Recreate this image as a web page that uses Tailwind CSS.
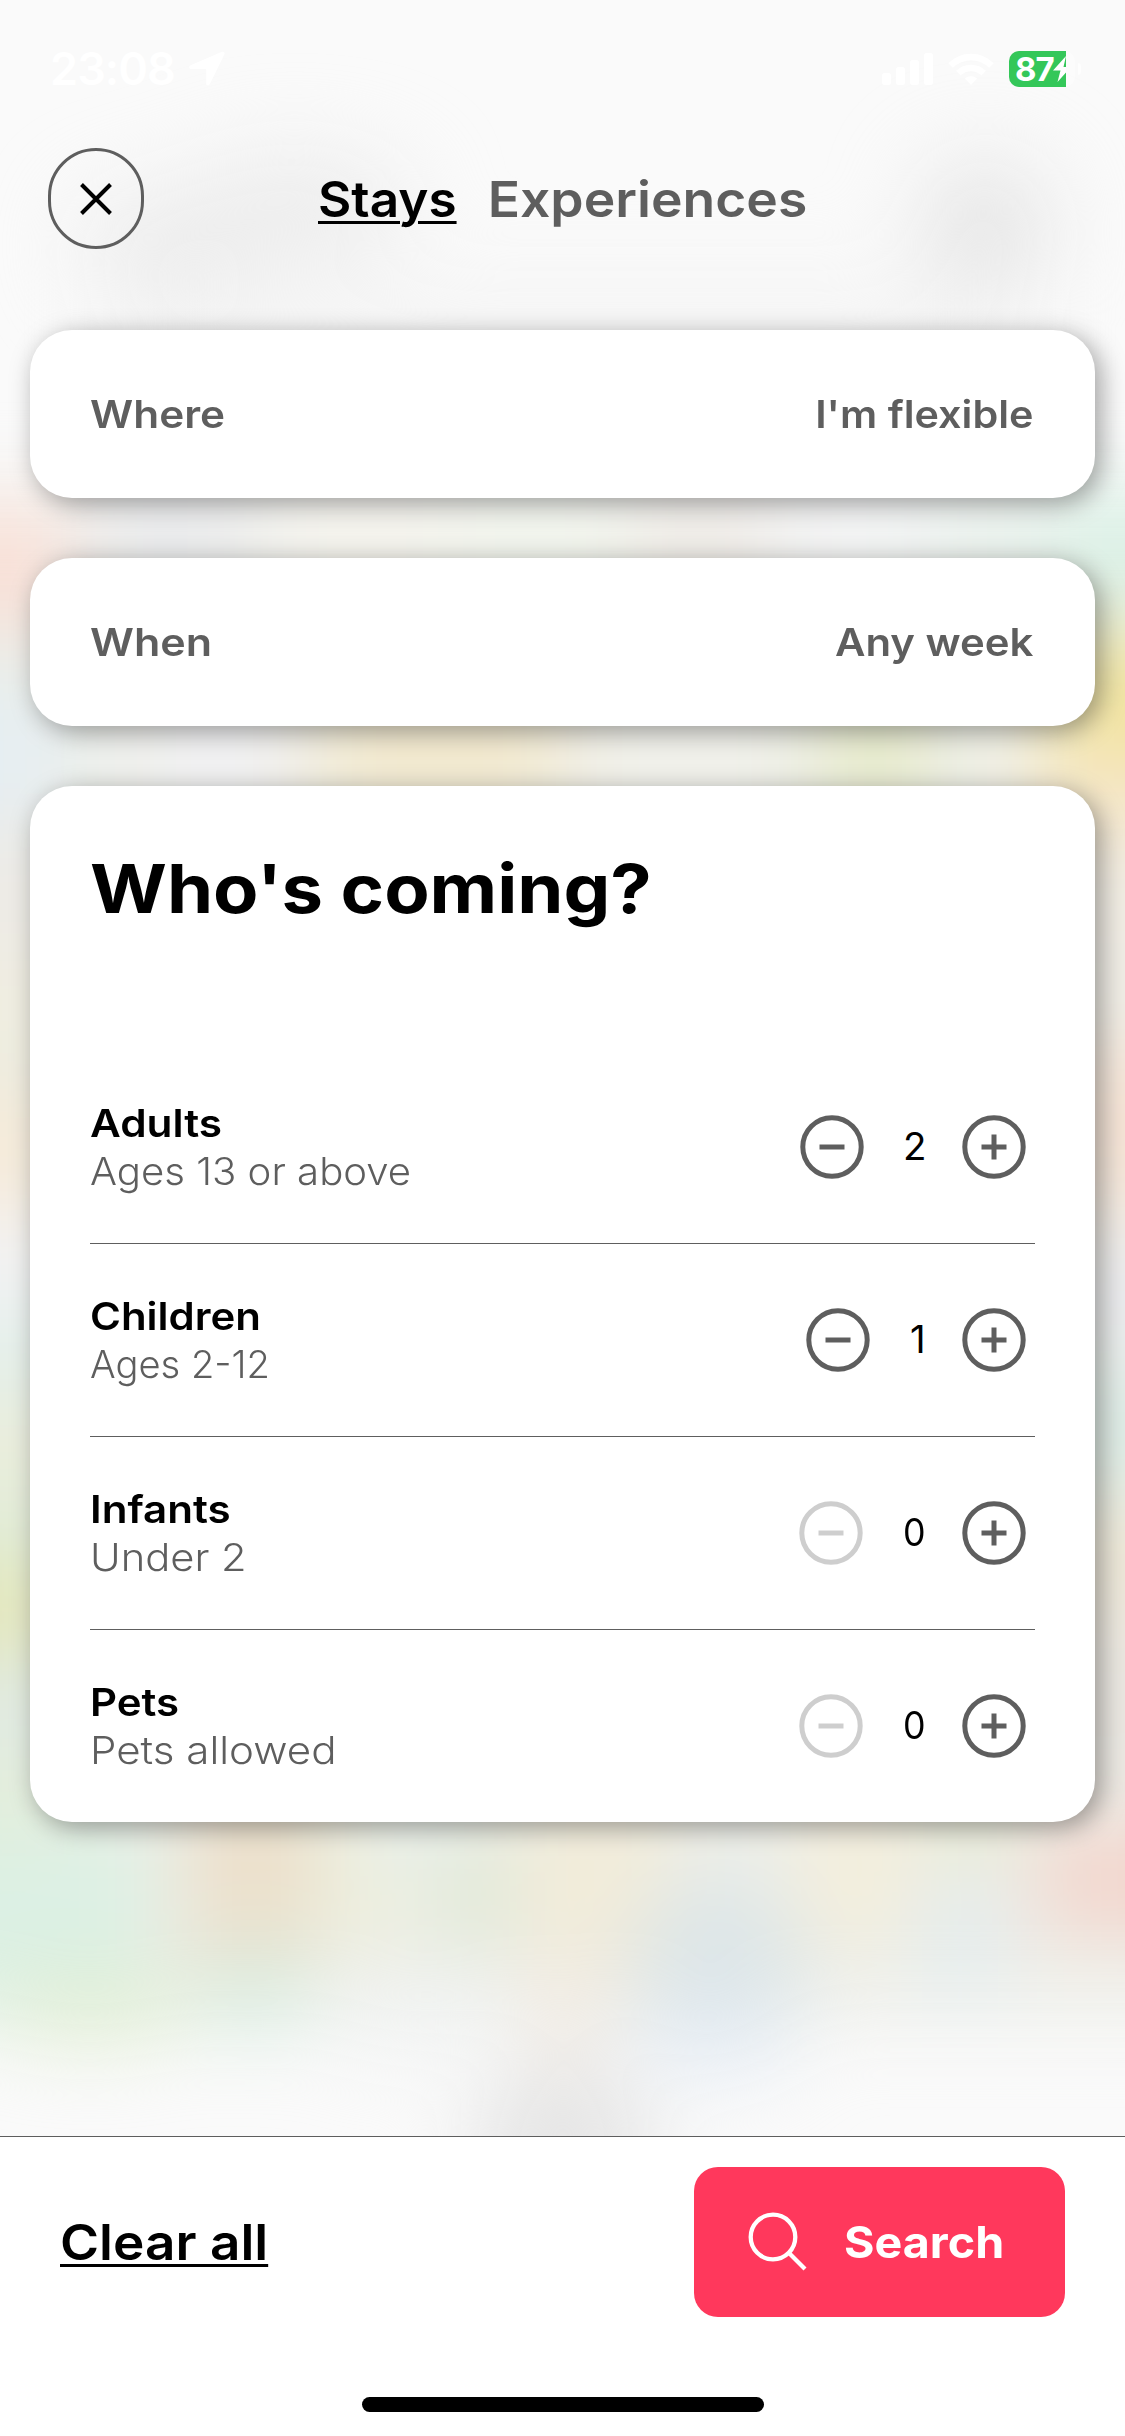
<!DOCTYPE html>
<html lang="en">
<head>
<meta charset="utf-8">
<meta name="viewport" content="width=device-width, initial-scale=1">
<title>Search stays</title>
<script src="https://cdn.jsdelivr.net/npm/@tailwindcss/browser@4"></script>
</head>
<body class="bg-[#fafafa] font-['Inter',sans-serif] text-black">
<div class="relative isolate flex h-[2436px] w-[1125px] flex-col overflow-hidden">

  <!-- Frosted map backdrop -->
  <svg class="absolute inset-0 -z-10" width="1125" height="2436" viewBox="0 0 1125 2436" color-interpolation-filters="sRGB">
    <defs>
      <filter id="soft" filterUnits="userSpaceOnUse" x="-200" y="-200" width="1525" height="2836"><feGaussianBlur stdDeviation="40"/></filter>
      <filter id="haze" filterUnits="userSpaceOnUse" x="-200" y="-200" width="1525" height="2836"><feGaussianBlur stdDeviation="46"/></filter>
    </defs>
    <rect width="1125" height="2436" fill="#fafafa"/>
    <g filter="url(#haze)">
      <ellipse cx="165" cy="245" rx="85" ry="50" fill="#ebebeb"/>
      <ellipse cx="295" cy="210" rx="115" ry="50" fill="#ebebeb"/>
      <ellipse cx="985" cy="226" rx="62" ry="62" fill="#e3e3e3"/>
      <rect x="120" y="290" width="900" height="90" fill="#f4f4f4"/>
    </g>
    <g filter="url(#soft)">
      <rect x="-150" y="490" width="1425" height="1530" fill="#eeefe9"/>
      <rect x="-150" y="510" width="215" height="120" fill="#fadfd6"/>
      <rect x="-150" y="630" width="215" height="70" fill="#e9efea"/>
      <rect x="-150" y="700" width="215" height="120" fill="#e5eef3"/>
      <rect x="-150" y="820" width="215" height="140" fill="#edebe6"/>
      <rect x="-150" y="960" width="215" height="90" fill="#f0eddf"/>
      <rect x="-150" y="1050" width="215" height="40" fill="#e9ede2"/>
      <rect x="-150" y="1090" width="215" height="120" fill="#f6ead8"/>
      <rect x="-150" y="1210" width="215" height="100" fill="#f2f2f4"/>
      <rect x="-150" y="1310" width="215" height="90" fill="#e2efea"/>
      <rect x="-150" y="1400" width="215" height="90" fill="#ebedda"/>
      <rect x="-150" y="1490" width="215" height="80" fill="#dfecd8"/>
      <rect x="-150" y="1570" width="215" height="80" fill="#e4e6b4"/>
      <rect x="-150" y="1650" width="215" height="110" fill="#dfeae2"/>
      <rect x="-150" y="1760" width="215" height="70" fill="#e4eed9"/>

      <rect x="1060" y="490" width="215" height="120" fill="#daf0e5"/>
      <rect x="1050" y="640" width="225" height="110" fill="#f1e49c"/>
      <rect x="1030" y="750" width="245" height="80" fill="#f6e5c4"/>
      <rect x="1060" y="830" width="215" height="150" fill="#f1ede4"/>
      <rect x="1060" y="1040" width="215" height="170" fill="#f5e3d5"/>
      <rect x="1060" y="1250" width="215" height="90" fill="#eaeaee"/>
      <rect x="1060" y="1370" width="215" height="120" fill="#dcece6"/>
      <rect x="1060" y="1500" width="215" height="110" fill="#eee7d6"/>
      <rect x="1060" y="1610" width="215" height="180" fill="#ebe7e1"/>

      <rect x="90" y="500" width="160" height="80" fill="#e5e6e9"/>
      <rect x="270" y="500" width="180" height="80" fill="#f3f1ea"/>
      <rect x="450" y="500" width="180" height="80" fill="#eff3ea"/>
      <rect x="630" y="500" width="140" height="80" fill="#ece7e2"/>
      <rect x="770" y="500" width="160" height="80" fill="#f0f1f3"/>
      <rect x="930" y="500" width="130" height="80" fill="#e5efea"/>
      <rect x="150" y="690" width="130" height="120" fill="#f0f0f3"/>
      <rect x="320" y="690" width="240" height="120" fill="#f2e8cc"/>
      <rect x="580" y="690" width="190" height="120" fill="#f0f0ea"/>
      <rect x="820" y="690" width="110" height="120" fill="#e5e9c7"/>

      <rect x="-150" y="1830" width="300" height="190" fill="#dcf0e4"/>
      <rect x="190" y="1780" width="120" height="180" fill="#ecdfca"/>
      <rect x="310" y="1800" width="110" height="150" fill="#edeedd"/>
      <rect x="370" y="1800" width="80" height="70" fill="#e8f1ee"/>
      <rect x="440" y="1840" width="70" height="110" fill="#dfe8d6"/>
      <rect x="520" y="1800" width="150" height="200" fill="#f2ecd9"/>
      <rect x="800" y="1800" width="110" height="140" fill="#f4eedb"/>
      <rect x="930" y="1790" width="80" height="70" fill="#e8ead0"/>
      <rect x="920" y="1880" width="80" height="120" fill="#e3ecee"/>
      <rect x="1040" y="1830" width="220" height="100" fill="#f3d4cb"/>
      <ellipse cx="255" cy="1990" rx="60" ry="46" fill="#d9ece0"/>
      <ellipse cx="90" cy="2010" rx="110" ry="34" fill="#e1eed4"/>
      <rect x="340" y="1960" width="170" height="90" fill="#f0f2f1"/>
      <ellipse cx="718" cy="1965" rx="90" ry="90" fill="#dde6e8"/>
      <ellipse cx="710" cy="2040" rx="85" ry="36" fill="#e5ecf4"/>
      <rect x="530" y="1950" width="70" height="160" fill="#f1ebe4"/>
      <ellipse cx="562" cy="2145" rx="95" ry="80" fill="#e6e6e6"/>
    </g>
  </svg>

  <!-- Status bar -->
  <div class="flex h-[137px] items-center justify-between pl-[50px] pr-[44px] text-white">
    <div class="flex items-center gap-[14px]">
      <span class="text-[45px] leading-[54px] font-semibold tracking-[-0.900px]">23:08</span>
      <svg width="36" height="35" viewBox="0 0 36 35" fill="currentColor"><path d="M33 .8 1.6 14.2C-.6 15.200-.2 18 2.200 18H16.400c.5 0 .8.300.8.800v13.400c0 2.500 2.700 3 3.700.8L35.300 3.600C36.200 1.600 34.800.1 33 .8Z"/></svg>
    </div>
    <div class="flex items-center">
      <svg width="52" height="34" viewBox="0 0 52 34" fill="currentColor"><rect y="21" width="9" height="12" rx="2.500"/><rect x="14" y="15" width="9" height="18" rx="2.500"/><rect x="28" y="8" width="9" height="25" rx="2.500"/><rect x="42" y="1" width="9" height="32" rx="2.500"/></svg>
      <svg class="ml-[14px]" width="46" height="34" viewBox="0 0 46 34" fill="none" stroke="currentColor" stroke-width="6.500"><path d="M2.600 13.500C14 2 32 2 43.400 13.500M10.300 21.200c7.200-7 18.200-7 25.400 0"/><path d="m23 33-6-6.500c3.500-3 8.500-3 12 0Z" fill="currentColor" stroke="none"/></svg>
      <div class="ml-[15px] flex h-9 w-[66px] rounded-[10px] bg-white/40">
        <div class="flex h-9 w-[57px] items-center rounded-l-[10px] bg-[#34c759] pl-[6px]">
          <span class="w-[38px] text-[33px] leading-9 font-bold tracking-[-1px]">87</span>
          <svg class="shrink-0" width="13" height="26" viewBox="0 0 13 26" fill="currentColor"><path d="M13 0 0 14.500h7.500L4.500 26 18 11h-7.500Z"/></svg>
        </div>
      </div>
      <div class="ml-[3px] h-3 w-[3px] rounded-r-full bg-white/70"></div>
    </div>
  </div>

  <!-- Tabs -->
  <header class="relative mt-[11px] flex h-[101px] items-center justify-center">
    <button class="absolute left-12 top-0 flex h-[101px] w-24 items-center justify-center rounded-[48px] border-[3px] border-[#5e5e5e]" aria-label="Close">
      <svg width="32" height="32" viewBox="0 0 32 32" fill="none" stroke="#000" stroke-width="4"><path d="m1.500 1.500 29 29m0-29-29 29"/></svg>
    </button>
    <nav class="flex w-[489px] justify-between text-[50px] leading-[60px] font-[560]">
      <a class="origin-left scale-x-[1.025] underline decoration-[3px] underline-offset-[4px]">Stays</a>
      <a class="origin-right scale-x-[1.068] text-[#5e5e5e]">Experiences</a>
    </nav>
  </header>

  <!-- Search criteria -->
  <main class="mt-[81px] flex flex-col gap-[60px] px-[30px]">
    <section class="flex h-[168px] items-center justify-between rounded-[42px] bg-white pl-[60px] pr-[62px] text-[38.5px] leading-[60px] font-[560] text-[#5e5e5e] shadow-[6px_6px_26px_rgba(0,0,0,0.360)]">
      <span class="origin-left scale-x-[1.100]">Where</span><span class="origin-right scale-x-[1.073]">I'm flexible</span>
    </section>
    <section class="flex h-[168px] items-center justify-between rounded-[42px] bg-white pl-[60px] pr-[62px] text-[38.5px] leading-[60px] font-[560] text-[#5e5e5e] shadow-[6px_6px_26px_rgba(0,0,0,0.360)]">
      <span class="origin-left scale-x-[1.118]">When</span><span class="origin-right scale-x-[1.088]">Any week</span>
    </section>
    <section class="h-[1036px] rounded-[42px] bg-white px-[60px] pt-[63px] shadow-[6px_6px_26px_rgba(0,0,0,0.360)]">
      <h1 class="mb-[122px] w-max origin-left scale-x-[1.106] text-[67px] leading-[80px] font-bold">Who's coming?</h1>

      <div class="flex items-center justify-between py-12 pr-[9px]">
        <div class="text-[38.5px] leading-[48px]"><h2 class="w-max origin-left scale-x-[1.100] font-semibold">Adults</h2><p class="w-max origin-left scale-x-[1.042] font-[350] text-[#5e5e5e]">Ages 13 or above</p></div>
        <div class="flex items-center">
          <svg width="64" height="64" viewBox="0 0 64 64" fill="none" stroke="#5e5e5e" stroke-width="5"><circle cx="32" cy="32" r="29.200"/><path d="M19.500 32h25"/></svg>
          <span class="w-[98px] pl-[39px] text-[38.5px]">2</span>
          <svg width="64" height="64" viewBox="0 0 64 64" fill="none" stroke="#5e5e5e" stroke-width="5"><circle cx="32" cy="32" r="29.200"/><path d="M19.500 32h25M32 19.500v25"/></svg>
        </div>
      </div>

      <div class="flex items-center justify-between border-t border-[#5e5e5e] py-12 pr-[9px]">
        <div class="text-[38.5px] leading-[48px]"><h2 class="w-max origin-left scale-x-[1.090] font-semibold">Children</h2><p class="w-max origin-left scale-x-[0.990] font-[350] text-[#5e5e5e]">Ages 2-12</p></div>
        <div class="flex items-center">
          <svg width="64" height="64" viewBox="0 0 64 64" fill="none" stroke="#5e5e5e" stroke-width="5"><circle cx="32" cy="32" r="29.200"/><path d="M19.500 32h25"/></svg>
          <span class="w-[92px] pl-[40px] text-[38.5px]">1</span>
          <svg width="64" height="64" viewBox="0 0 64 64" fill="none" stroke="#5e5e5e" stroke-width="5"><circle cx="32" cy="32" r="29.200"/><path d="M19.500 32h25M32 19.500v25"/></svg>
        </div>
      </div>

      <div class="flex items-center justify-between border-t border-[#5e5e5e] py-12 pr-[9px]">
        <div class="text-[38.5px] leading-[48px]"><h2 class="w-max origin-left scale-x-[1.095] font-semibold">Infants</h2><p class="w-max origin-left scale-x-[1.082] font-[350] text-[#5e5e5e]">Under 2</p></div>
        <div class="flex items-center">
          <svg width="64" height="64" viewBox="0 0 64 64" fill="none" stroke="#cecece" stroke-width="5"><circle cx="32" cy="32" r="29.200"/><path d="M19.500 32h25"/></svg>
          <span class="w-[99px] pl-[40px]"><span class="inline-block origin-left scale-x-[0.930] text-[38.5px]">0</span></span>
          <svg width="64" height="64" viewBox="0 0 64 64" fill="none" stroke="#5e5e5e" stroke-width="5"><circle cx="32" cy="32" r="29.200"/><path d="M19.500 32h25M32 19.500v25"/></svg>
        </div>
      </div>

      <div class="flex items-center justify-between border-t border-[#5e5e5e] py-12 pr-[9px]">
        <div class="text-[38.5px] leading-[48px]"><h2 class="w-max origin-left scale-x-[1.090] font-semibold">Pets</h2><p class="w-max origin-left scale-x-[1.093] font-[350] text-[#5e5e5e]">Pets allowed</p></div>
        <div class="flex items-center">
          <svg width="64" height="64" viewBox="0 0 64 64" fill="none" stroke="#cecece" stroke-width="5"><circle cx="32" cy="32" r="29.200"/><path d="M19.500 32h25"/></svg>
          <span class="w-[99px] pl-[40px]"><span class="inline-block origin-left scale-x-[0.930] text-[38.5px]">0</span></span>
          <svg width="64" height="64" viewBox="0 0 64 64" fill="none" stroke="#5e5e5e" stroke-width="5"><circle cx="32" cy="32" r="29.200"/><path d="M19.500 32h25M32 19.500v25"/></svg>
        </div>
      </div>
    </section>
  </main>

  <!-- Bottom bar -->
  <footer class="mt-auto flex h-[300px] flex-col items-center border-t border-[#5e5e5e] bg-white pt-[30px]">
    <div class="flex w-full items-center justify-between px-[60px]">
      <a class="origin-left scale-x-[1.062] text-[50px] leading-[60px] font-[560] underline decoration-[3px] underline-offset-[4px]">Clear all</a>
      <button class="flex h-[150px] w-[371px] items-center rounded-[24px] bg-[#ff385c] pl-[54px] text-white">
        <svg width="60" height="60" viewBox="0 0 60 60" fill="none" stroke="currentColor" stroke-width="4.300"><circle cx="25" cy="25" r="22.300"/><path d="m41 41 16 16"/></svg>
        <span class="ml-[36px] origin-left scale-x-[1.060] text-[44px] font-bold">Search</span>
      </button>
    </div>
    <div class="mt-20 h-[15px] w-[402px] rounded-full bg-black"></div>
  </footer>
</div>
</body>
</html>
